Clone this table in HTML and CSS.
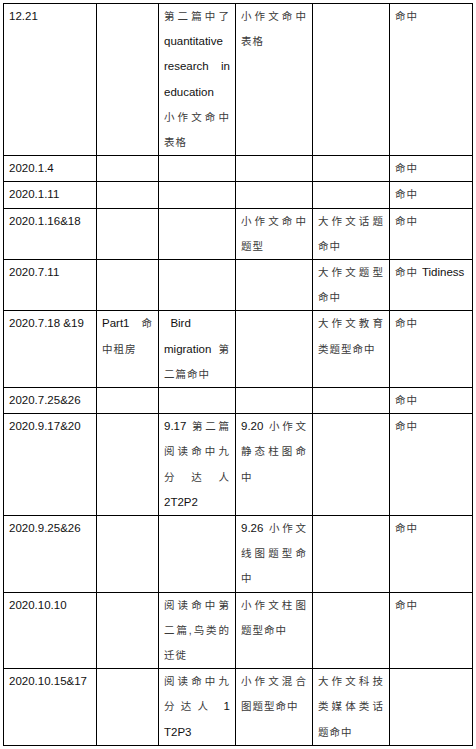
FILE: index.html
```html
<!DOCTYPE html>
<html lang="zh-CN">
<head>
<meta charset="utf-8">
<title>命中记录</title>
<link rel="stylesheet" href="styles.css">
</head>
<body>
<table class="grid">
<colgroup><col class="c1"><col class="c2"><col class="c3"><col class="c4"><col class="c5"><col class="c6"></colgroup>
<tr>
<td class="d">12.21</td><td></td>
<td>第二篇中了<span class="en">quantitative research in education</span><br>小作文命中表格</td>
<td>小作文命中表格</td><td></td><td>命中</td>
</tr>
<tr><td class="d">2020.1.4</td><td></td><td></td><td></td><td></td><td>命中</td></tr>
<tr><td class="d">2020.1.11</td><td></td><td></td><td></td><td></td><td>命中</td></tr>
<tr><td class="d">2020.1.16&amp;18</td><td></td><td></td><td>小作文命中题型</td><td>大作文话题命中</td><td>命中</td></tr>
<tr><td class="d">2020.7.11</td><td></td><td></td><td></td><td>大作文题型命中</td><td>命中 <span class="en">Tidiness</span></td></tr>
<tr>
<td class="d">2020.7.18 &amp;19</td>
<td><span class="en">Part1</span> 命中租房</td>
<td><span class="en">&nbsp;&nbsp;Bird</span><br><span class="en">migration</span> 第二篇命中</td>
<td></td><td>大作文教育类题型命中</td><td>命中</td>
</tr>
<tr><td class="d">2020.7.25&amp;26</td><td></td><td></td><td></td><td></td><td>命中</td></tr>
<tr>
<td class="d">2020.9.17&amp;20</td><td></td>
<td><span class="en">9.17</span> 第二篇阅读命中九分达人<span class="en">2T2P2</span></td>
<td><span class="en">9.20</span> 小作文静态柱图命中</td>
<td></td><td>命中</td>
</tr>
<tr>
<td class="d">2020.9.25&amp;26</td><td></td><td></td>
<td><span class="en">9.26</span> 小作文线图题型命中</td>
<td></td><td>命中</td>
</tr>
<tr>
<td class="d">2020.10.10</td><td></td>
<td>阅读命中第二篇,鸟类的迁徙</td>
<td>小作文柱图题型命中</td>
<td></td><td>命中</td>
</tr>
<tr>
<td class="d">2020.10.15&amp;17</td><td></td>
<td>阅读命中九分达人 <span class="en">1 T2P3</span></td>
<td>小作文混合图题型命中</td>
<td>大作文科技类媒体类话题命中</td>
<td></td>
</tr>
</table>
</body>
</html>
```
FILE: styles.css
```css
html, body {
  margin: 0;
  padding: 0;
  background: #fff;
}
body {
  padding: 3px 0 0 3px;
  font-family: "Liberation Sans", "Noto Sans CJK SC", sans-serif;
}
.grid {
  border-collapse: collapse;
  table-layout: fixed;
  width: 469px;
}
.c1 { width: 93px; }
.c2 { width: 62px; }
.c3 { width: 77px; }
.c4 { width: 77px; }
.c5 { width: 77px; }
.c6 { width: 83px; }
.grid td {
  border: 1px solid #000;
  padding: 0 5px;
  vertical-align: top;
  text-align: justify;
  font-size: 10.5px;
  letter-spacing: 1px;
  line-height: 25.2px;
  color: #3a3a3a;
  word-break: normal;
}
.grid td.d {
  font-size: 11.5px;
  letter-spacing: 0;
  color: #111;
}
.en {
  font-size: 11.5px;
  letter-spacing: 0;
  line-height: 1;
  color: #111;
}
```
